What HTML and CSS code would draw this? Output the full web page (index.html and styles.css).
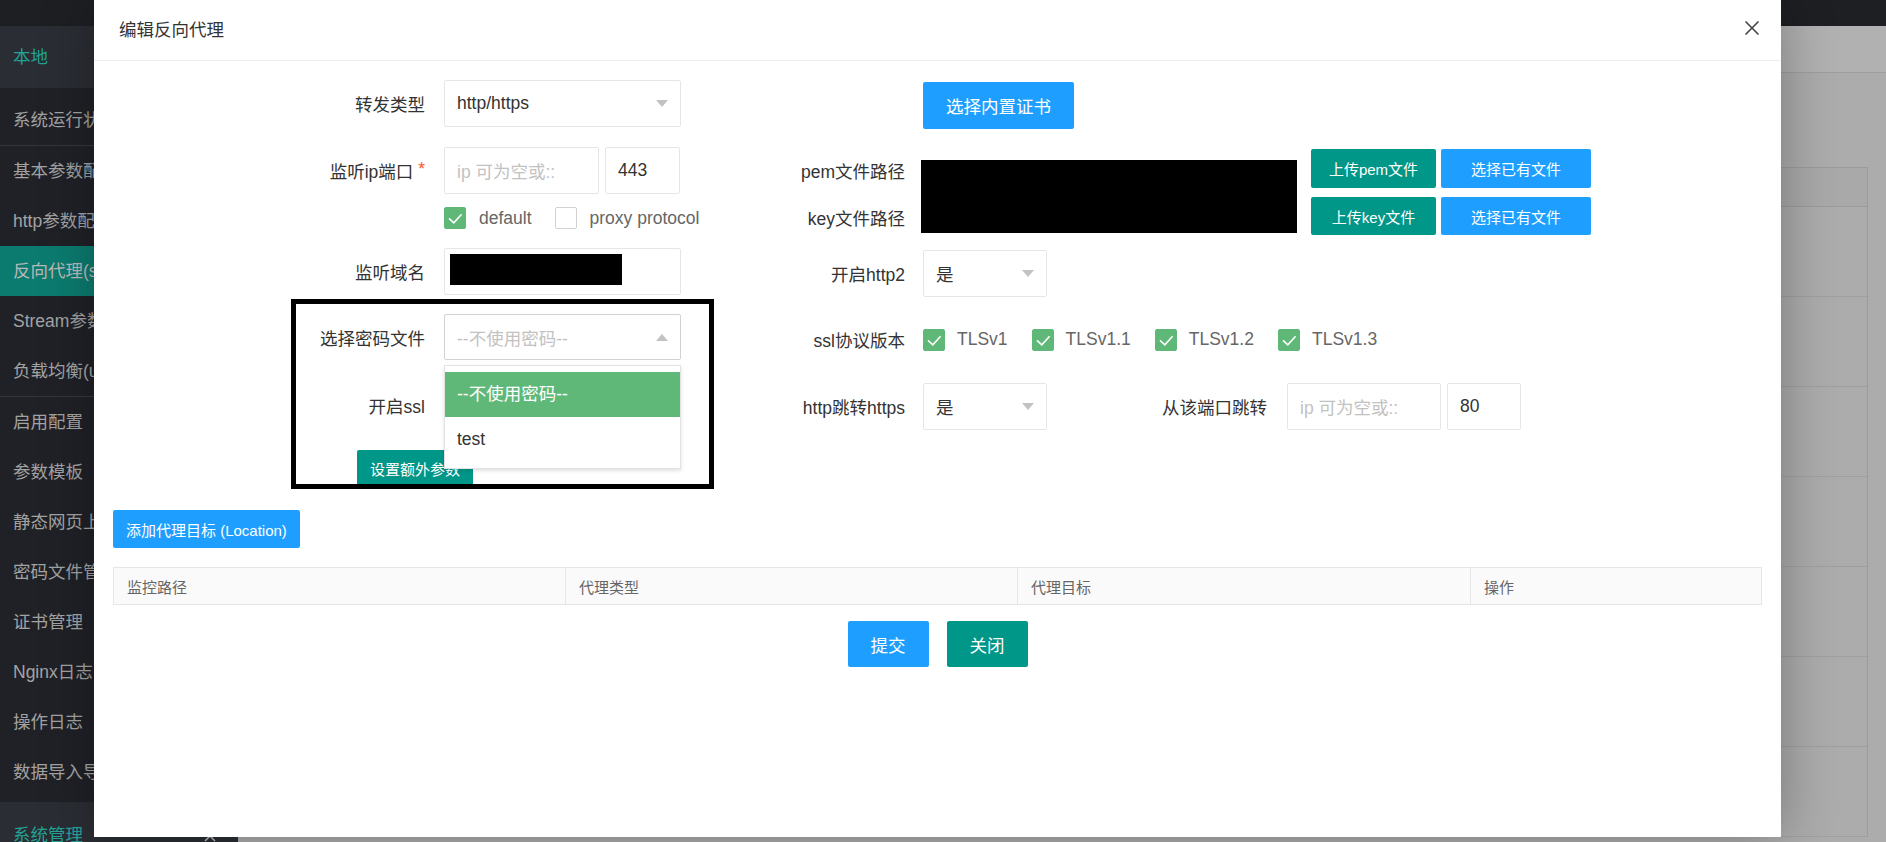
FILE: index.html
```html
<!DOCTYPE html>
<html lang="zh-CN">
<head>
<meta charset="utf-8">
<title>编辑反向代理</title>
<link rel="stylesheet" href="styles.css">
</head>
<body>
<div class="app">
  <header class="topbar"></header>
  <div class="layout">
    <aside class="sidebar">
      <div class="nav-head">本地</div>
      <div class="nav">
        <div class="nav-group">
          <div class="nav-item">系统运行状态</div>
        </div>
        <div class="nav-group sep">
          <div class="nav-item">基本参数配置</div>
          <div class="nav-item">http参数配置</div>
          <div class="nav-item active">反向代理(server)</div>
          <div class="nav-item">Stream参数配置</div>
          <div class="nav-item">负载均衡(upstream)</div>
        </div>
        <div class="nav-group sep">
          <div class="nav-item">启用配置</div>
          <div class="nav-item">参数模板</div>
          <div class="nav-item">静态网页上传</div>
          <div class="nav-item">密码文件管理</div>
          <div class="nav-item">证书管理</div>
          <div class="nav-item">Nginx日志</div>
          <div class="nav-item">操作日志</div>
          <div class="nav-item">数据导入导出</div>
        </div>
      </div>
      <div class="nav-head nav-head-2">系统管理
        <svg class="caret" width="12" height="8" viewBox="0 0 12 8"><path d="M1 7 L6 2 L11 7" fill="none" stroke="#bbb" stroke-width="1.5"/></svg>
      </div>
    </aside>
    <main class="page">
      <div class="page-head"></div>
      <div class="page-tools"></div>
      <div class="page-table">
        <div class="pt-head"></div>
        <div class="pt-row"></div>
        <div class="pt-row"></div>
        <div class="pt-row"></div>
        <div class="pt-row"></div>
        <div class="pt-row"></div>
        <div class="pt-row"></div>
        <div class="pt-row"></div>
      </div>
    </main>
  </div>
</div>

<div class="modal">
  <div class="modal-head">
    <span class="modal-title">编辑反向代理</span>
    <span class="modal-close">
      <svg width="16" height="16" viewBox="0 0 16 16"><path d="M1.5 1.5 L14.5 14.5 M14.5 1.5 L1.5 14.5" fill="none" stroke="#444" stroke-width="1.6"/></svg>
    </span>
  </div>
  <div class="modal-body">
    <div class="form">
      <div class="col col-left">
        <div class="row r1">
          <label class="lbl">转发类型</label>
          <div class="select w237"><span class="val">http/https</span><i class="tri"></i></div>
        </div>
        <div class="row r2">
          <label class="lbl">监听ip端口 <span class="req">*</span></label>
          <div class="input w155 ph">ip 可为空或::</div>
          <div class="input w75 gap6">443</div>
        </div>
        <div class="row r3 checks">
          <span class="cb on"><svg width="22" height="22" viewBox="0 0 22 22"><path d="M5 11.3 L9.8 15.8 L17.6 7.2" fill="none" stroke="#fff" stroke-width="1.6"/></svg></span>
          <span class="cb-text">default</span>
          <span class="cb"></span>
          <span class="cb-text">proxy protocol</span>
        </div>
        <div class="row r4">
          <label class="lbl">监听域名</label>
          <div class="input w237 domain"><span class="redact domain-redact"></span></div>
        </div>
        <div class="row r5">
          <label class="lbl">选择密码文件</label>
          <div class="select w237 open">
            <span class="val ph">--不使用密码--</span><i class="tri up"></i>
            <div class="dropdown">
              <div class="opt selected">--不使用密码--</div>
              <div class="opt">test</div>
            </div>
          </div>
        </div>
        <div class="row r6">
          <label class="lbl">开启ssl</label>
        </div>
        <div class="row r7">
          <button class="btn btn-sm btn-teal extra">设置额外参数</button>
        </div>
      </div>

      <div class="col col-right">
        <div class="row q1">
          <span class="lbl2"></span>
          <button class="btn btn-blue btn-md">选择内置证书</button>
        </div>
        <div class="row q2">
          <div class="lbl-stack">
            <div class="lbl2 stack">pem文件路径</div>
            <div class="lbl2 stack">key文件路径</div>
          </div>
          <div class="redact cert-redact"></div>
          <div class="cert-btns">
            <button class="btn btn-sm btn-teal">上传pem文件</button>
            <button class="btn btn-sm btn-blue">选择已有文件</button>
            <button class="btn btn-sm btn-teal">上传key文件</button>
            <button class="btn btn-sm btn-blue">选择已有文件</button>
          </div>
        </div>
        <div class="row q3">
          <label class="lbl2">开启http2</label>
          <div class="select w124"><span class="val">是</span><i class="tri"></i></div>
        </div>
        <div class="row q4">
          <label class="lbl2">ssl协议版本</label>
          <span class="cb on"><svg width="22" height="22" viewBox="0 0 22 22"><path d="M5 11.3 L9.8 15.8 L17.6 7.2" fill="none" stroke="#fff" stroke-width="1.6"/></svg></span>
          <span class="cb-text tls">TLSv1</span>
          <span class="cb on"><svg width="22" height="22" viewBox="0 0 22 22"><path d="M5 11.3 L9.8 15.8 L17.6 7.2" fill="none" stroke="#fff" stroke-width="1.6"/></svg></span>
          <span class="cb-text tls">TLSv1.1</span>
          <span class="cb on"><svg width="22" height="22" viewBox="0 0 22 22"><path d="M5 11.3 L9.8 15.8 L17.6 7.2" fill="none" stroke="#fff" stroke-width="1.6"/></svg></span>
          <span class="cb-text tls">TLSv1.2</span>
          <span class="cb on"><svg width="22" height="22" viewBox="0 0 22 22"><path d="M5 11.3 L9.8 15.8 L17.6 7.2" fill="none" stroke="#fff" stroke-width="1.6"/></svg></span>
          <span class="cb-text tls">TLSv1.3</span>
        </div>
        <div class="row q5">
          <label class="lbl2">http跳转https</label>
          <div class="select w124"><span class="val">是</span><i class="tri"></i></div>
          <label class="lbl3">从该端口跳转</label>
          <div class="input w154 ph">ip 可为空或::</div>
          <div class="input w74 gap6">80</div>
        </div>
      </div>
    </div>

    <div class="loc-row">
      <button class="btn btn-sm btn-blue loc">添加代理目标 (Location)</button>
    </div>

    <div class="table">
      <div class="th">监控路径</div>
      <div class="th">代理类型</div>
      <div class="th">代理目标</div>
      <div class="th">操作</div>
    </div>

    <div class="footer">
      <button class="btn btn-blue btn-md">提交</button>
      <button class="btn btn-teal btn-md">关闭</button>
    </div>
  </div>
  <div class="annot"></div>
</div>
</body>
</html>
```
FILE: styles.css
```css
* { box-sizing: border-box; }
html, body { margin: 0; padding: 0; }
body {
  width: 1886px;
  height: 842px;
  overflow: hidden;
  position: relative;
  font-family: "Liberation Sans", "Noto Sans CJK SC", sans-serif;
  font-size: 17.5px;
  color: #333;
  background: #a9a9a9;
}

/* ---------- underlying app (dimmed) ---------- */
.app { display: grid; grid-template-rows: 26px 1fr; height: 842px; }
.topbar { background: #1d1f23; }
.layout { display: grid; grid-template-columns: 238px 1fr; min-height: 0; }
.sidebar { background: #1f2127; overflow: hidden; }
.nav-head {
  height: 62px;
  line-height: 62px;
  padding-left: 13px;
  background: #2a2d33;
  color: #22a397;
  white-space: nowrap;
}
.nav-head-2 { margin-top: 5px; display: flex; align-items: center; line-height: normal; }
.caret { margin-left: auto; margin-right: 22px; margin-top: 10px; }
.nav { padding-top: 7px; }
.nav-group.sep { border-top: 1px solid #33363c; }
.nav-item {
  height: 50px;
  line-height: 50px;
  padding-left: 13px;
  color: #a3a3a3;
  white-space: nowrap;
}
.nav-item.active { background: #0c7b6f; color: #b9b9b9; }

.page { background: #acacac; padding-right: 18px; overflow: hidden; }
.page-head { height: 47px; background: #b1b1b1; border-bottom: 1px solid #9e9e9e; margin-right: -18px; }
.page-tools { height: 94px; }
.page-table { border-right: 1px solid #9c9c9c; border-top: 1px solid #9c9c9c; }
.pt-head { height: 39px; border-bottom: 1px solid #9c9c9c; background: #a9a9a9; }
.pt-row { height: 90px; border-bottom: 1px solid #9f9f9f; }

/* ---------- modal ---------- */
.modal {
  position: absolute;
  left: 94px;
  top: 0;
  width: 1687px;
  height: 837px;
  background: #fff;
  box-shadow: 1px 1px 50px rgba(0, 0, 0, 0.3);
  z-index: 10;
}
.modal-head {
  height: 61px;
  border-bottom: 1px solid #eee;
  padding: 0 21px 4px 25px;
  display: flex;
  align-items: center;
}
.modal-title { color: #333; font-size: 17.5px; }
.modal-close { margin-left: auto; display: flex; }

.modal-body { padding: 19px 19px 0 19px; }
.form { display: flex; }
.col-left { width: 627px; flex: none; }
.col-right { flex: 1; }

.row { display: flex; align-items: center; }
.lbl {
  width: 331px;
  flex: none;
  padding-right: 19px;
  text-align: right;
  color: #333;
  white-space: nowrap;
}
.req { color: #ff5722; vertical-align: 3px; }
.lbl2 {
  width: 183px;
  flex: none;
  padding-right: 18px;
  text-align: right;
  color: #333;
  white-space: nowrap;
}
.lbl3 {
  width: 240px;
  flex: none;
  padding-right: 20px;
  text-align: right;
  color: #333;
  white-space: nowrap;
}

/* rows left */
.r1 { height: 47px; margin-bottom: 20px; }
.r2 { height: 47px; margin-bottom: 13px; }
.r3 { height: 22px; margin-bottom: 19px; padding-left: 331px; }
.r4 { height: 47px; margin-bottom: 19px; }
.r5 { height: 46px; margin-bottom: 22px; }
.r6 { height: 47px; margin-bottom: 21px; }
.r7 { height: 37px; }

/* rows right */
.q1 { height: 47px; margin-top: 2px; margin-bottom: 20px; }
.q2 { height: 86px; margin-bottom: 15px; align-items: flex-start; }
.q3 { height: 47px; margin-bottom: 19px; }
.q4 { height: 47px; margin-bottom: 20px; }
.q5 { height: 47px; }

/* controls */
.input, .select {
  height: 100%;
  border: 1px solid #e6e6e6;
  border-radius: 2px;
  background: #fff;
  padding-left: 12px;
  display: flex;
  align-items: center;
  color: #333;
  white-space: nowrap;
  overflow: hidden;
  flex: none;
}
.select { position: relative; overflow: visible; }
.select.open { border-color: #d2d2d2; }
.ph { color: #c2c2c2; }
.w237 { width: 237px; }
.w155 { width: 155px; }
.w75 { width: 75px; }
.w124 { width: 124px; }
.w154 { width: 154px; }
.w74 { width: 74px; }
.gap6 { margin-left: 6px; }

.tri {
  margin-left: auto;
  margin-right: 12px;
  width: 0;
  height: 0;
  border-left: 6.5px solid transparent;
  border-right: 6.5px solid transparent;
  border-top: 7px solid #c2c2c2;
}
.tri.up { border-top: 0; border-bottom: 7px solid #c2c2c2; }

.domain { padding-left: 5px; align-items: flex-start; padding-top: 5px; }
.redact { background: #000; display: block; }
.domain-redact { width: 172px; height: 31px; }

.dropdown {
  position: absolute;
  left: -1px;
  right: -1px;
  top: calc(100% + 6px);
  background: #fff;
  border: 1px solid #e2e2e2;
  box-shadow: 0 2px 4px rgba(0, 0, 0, 0.12);
  padding: 6px 0;
  z-index: 5;
}
.opt { height: 45px; line-height: 45px; padding-left: 12px; color: #333; }
.opt.selected { background: #5fb878; color: #fff; }

.cb {
  width: 22px;
  height: 22px;
  flex: none;
  border: 1px solid #d2d2d2;
  border-radius: 2px;
  background: #fff;
  display: flex;
}
.cb.on { background: #5fb878; border-color: #5fb878; }
.cb.on svg { margin: -1px; }
.cb-text { margin-left: 13px; margin-right: 23px; color: #666; white-space: nowrap; }
.cb-text.tls { margin-left: 12px; margin-right: 24px; }

/* buttons */
.btn {
  border: 0;
  border-radius: 2px;
  color: #fff;
  font-family: inherit;
  white-space: nowrap;
  cursor: pointer;
  padding: 0;
}
.btn-blue { background: #1e9fff; }
.btn-teal { background: #009688; }
.btn-md { height: 47px; padding: 0 23px; font-size: 17.5px; }
.btn-sm { height: 38px; padding: 0 13px; font-size: 15px; }
.extra { margin-left: 244px; }

.lbl-stack { width: 183px; flex: none; }
.lbl2.stack { height: 47px; line-height: 47px; }
.cert-redact { width: 376px; height: 73px; margin-top: 11px; margin-left: -2px; flex: none; }
.cert-btns {
  margin-left: 14px;
  display: grid;
  grid-template-columns: 125px 150px;
  grid-template-rows: 39px 38px;
  column-gap: 5px;
  row-gap: 9px;
}
.cert-btns .btn { height: 100%; padding: 0; text-align: center; }

/* location + table + footer */
.loc-row { margin-top: 23px; display: flex; }
.loc { height: 38px; }
.table {
  margin-top: 19px;
  display: grid;
  grid-template-columns: 451px 452px 453px 1fr;
  border: 1px solid #e6e6e6;
  background: #fafafa;
  height: 38px;
}
.th {
  padding-left: 13px;
  font-size: 15px;
  color: #666;
  display: flex;
  align-items: center;
  border-left: 1px solid #e6e6e6;
}
.th:first-child { border-left: 0; }
.footer { margin-top: 16px; display: flex; justify-content: center; gap: 18px; }
.footer .btn { height: 46px; }

/* annotation frame drawn over the screenshot */
.annot {
  position: absolute;
  left: 197px;
  top: 299px;
  width: 423px;
  height: 190px;
  border: 5px solid #000;
  z-index: 20;
  pointer-events: none;
}
```
